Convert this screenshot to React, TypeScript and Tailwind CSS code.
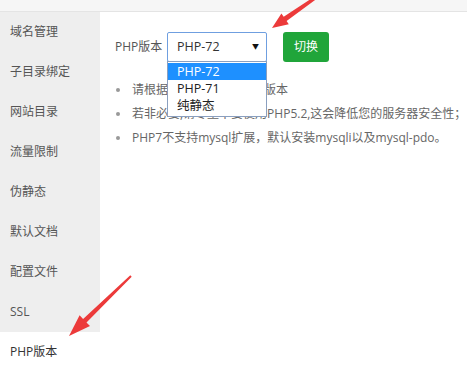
import React from "react";

const FONT = '"Open Sans","Noto Sans CJK SC",sans-serif';

function arrowPoints(tx: number, ty: number, hx: number, hy: number, headLen: number, headW: number, tailW: number, neckW: number) {
  const dx = hx - tx;
  const dy = hy - ty;
  const L = Math.hypot(dx, dy);
  const ux = dx / L;
  const uy = dy / L;
  const px = -uy;
  const py = ux;
  const nx = hx - ux * headLen;
  const ny = hy - uy * headLen;
  const pts = [
    [tx + px * tailW / 2, ty + py * tailW / 2],
    [nx + px * neckW / 2, ny + py * neckW / 2],
    [nx + px * headW / 2, ny + py * headW / 2],
    [hx, hy],
    [nx - px * headW / 2, ny - py * headW / 2],
    [nx - px * neckW / 2, ny - py * neckW / 2],
    [tx - px * tailW / 2, ty - py * tailW / 2],
  ];
  return pts.map((p) => p.map((v) => v.toFixed(1)).join(",")).join(" ");
}

const menu = ["域名管理", "子目录绑定", "网站目录", "流量限制", "伪静态", "默认文档", "配置文件", "SSL"];

export default function App() {
  return (
    <div
      className="relative w-[467px] h-[372px] overflow-hidden bg-white text-[12px]"
      style={{ fontFamily: FONT }}
    >
      <div className="h-[12px] bg-[#f6f6f6] border-b border-[#e4e4e4]" />
      <div className="flex h-[360px]">
        <div className="w-[100px] flex flex-col">
          <div className="bg-[#eeeeee] flex flex-col">
            {menu.map((m) => (
              <div key={m} className="h-[40px] flex items-center pl-[10px] text-[#555] text-[12px]">
                {m}
              </div>
            ))}
          </div>
          <div className="h-[40px] flex items-center pl-[10px] text-[#333] text-[12px] bg-white">PHP版本</div>
        </div>
        <div className="flex-1 pl-[15px] pt-[20px]">
          <div className="flex items-center h-[30px]">
            <span className="text-[#555] w-[52px]">PHP版本</span>
            <div className="relative">
              <div className="w-[100px] h-[30px] border border-[#6f9fe0] rounded-[2px] flex items-center pl-[9px] pr-[7px] text-[#333] text-[12.5px]">
                <span className="flex-1">PHP-72</span>
                <span className="text-[7px] text-[#111]">▼</span>
              </div>
              <div className="absolute left-0 top-[29px] w-[100px] border border-[#8a9fbf] bg-white text-[12.5px] z-10 py-[1px]">
                <div className="h-[17px] leading-[17px] px-[9px] bg-[#1e90ff] text-white">PHP-72</div>
                <div className="h-[17px] leading-[17px] px-[9px] text-[#222]">PHP-71</div>
                <div className="h-[18px] leading-[18px] px-[9px] text-[#222]">纯静态</div>
              </div>
            </div>
            <div className="ml-[16px] w-[46px] h-[30px] rounded-[3px] bg-[#20a53a] text-white flex items-center justify-center text-[12px]">
              切换
            </div>
          </div>
          <div className="mt-[16px] flex flex-col text-[#666] text-[12px]">
            {[
              "请根据您的程序需求选择版本",
              "若非必要,请尽量不要使用PHP5.2,这会降低您的服务器安全性；",
              "PHP7不支持mysql扩展，默认安装mysqli以及mysql-pdo。",
            ].map((t) => (
              <div key={t} className="h-[24px] flex items-center whitespace-nowrap">
                <span className="w-[4px] h-[4px] rounded-full bg-[#999] ml-[1px] mr-[12px]" />
                <span>{t}</span>
              </div>
            ))}
          </div>
        </div>
      </div>
      <svg className="absolute left-0 top-0 pointer-events-none" width="467" height="372">
        <polygon points={arrowPoints(318, -4, 272, 28, 16, 13, 3, 5)} fill="#ec3a3a" />
        <polygon points={arrowPoints(131, 276, 69, 336, 22, 15, 2, 5)} fill="#ec3a3a" />
      </svg>
    </div>
  );
}
